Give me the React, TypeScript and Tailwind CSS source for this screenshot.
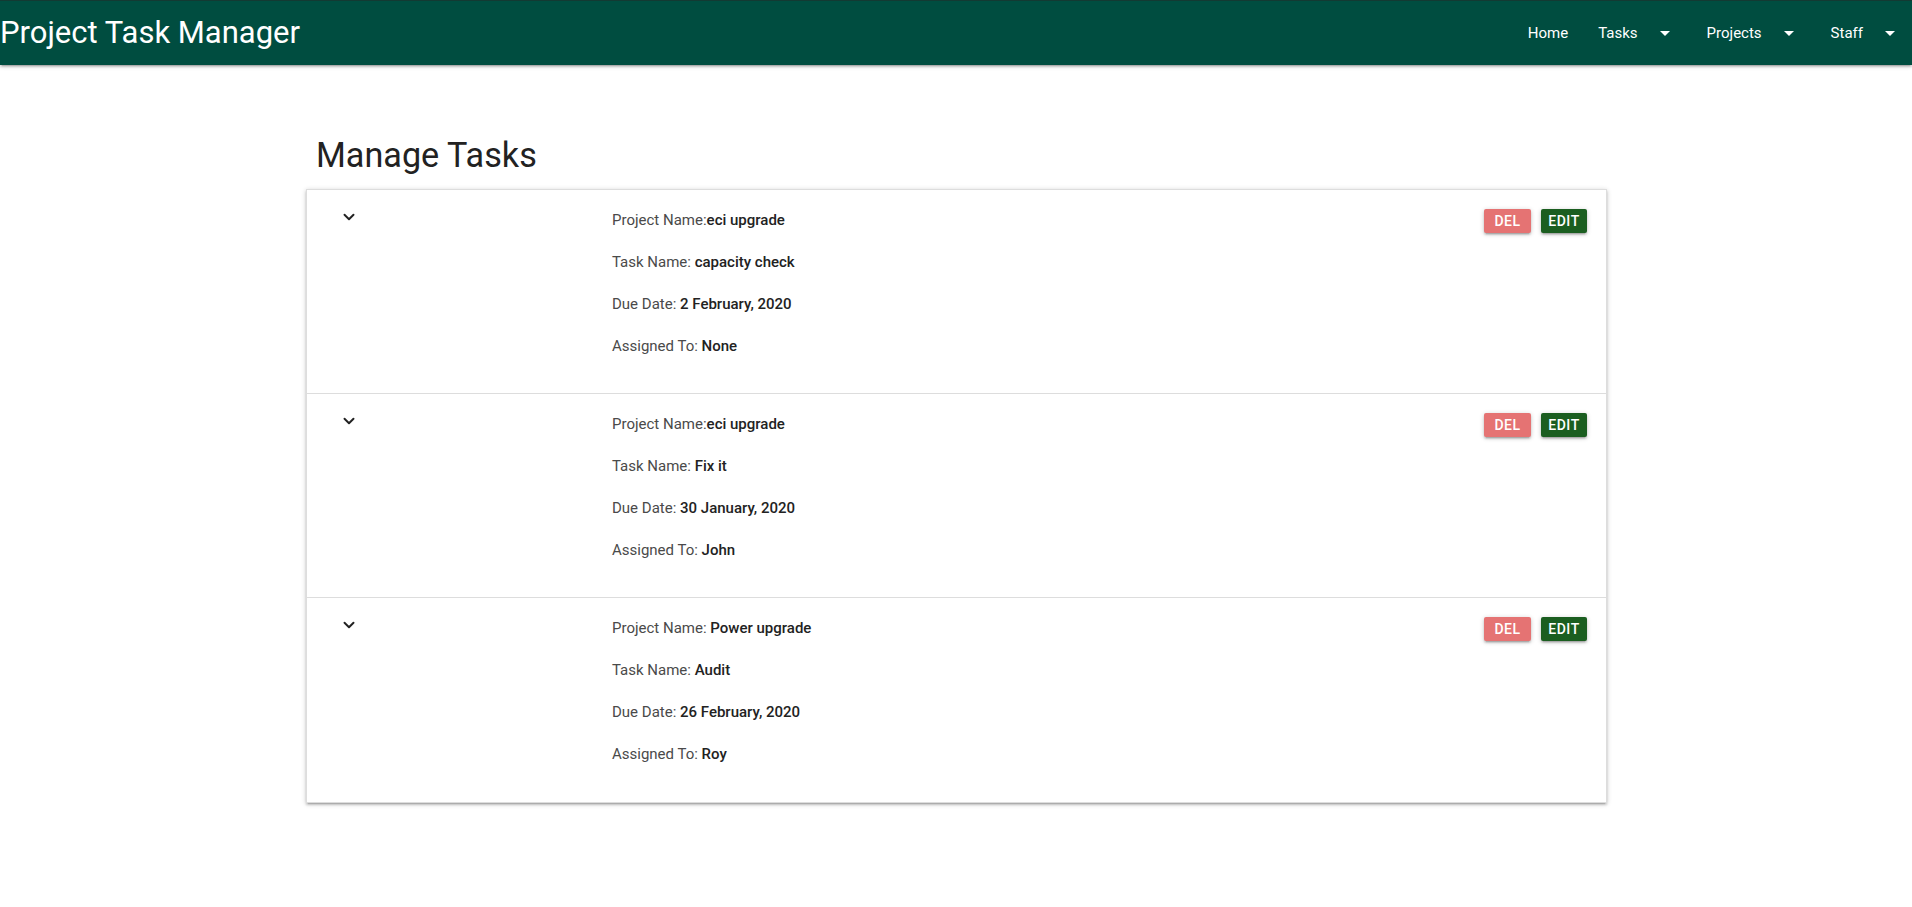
import { ChevronDown } from 'lucide-react';

type Task = {
  project: string;
  projectSep: string;
  name: string;
  due: string;
  assigned: string;
};

const tasks: Task[] = [
  { project: 'eci upgrade', projectSep: ':', name: 'capacity check', due: '2 February, 2020', assigned: 'None' },
  { project: 'eci upgrade', projectSep: ':', name: 'Fix it', due: '30 January, 2020', assigned: 'John' },
  { project: 'Power upgrade', projectSep: ': ', name: 'Audit', due: '26 February, 2020', assigned: 'Roy' },
];

const z1 =
  'shadow-[0_2px_2px_0_rgba(0,0,0,0.14),0_3px_1px_-2px_rgba(0,0,0,0.12),0_1px_5px_0_rgba(0,0,0,0.2)]';

function Caret() {
  return (
    <svg viewBox="0 0 24 24" className="ml-[15px] h-6 w-6 fill-white">
      <path d="M7 10l5 5 5-5z" />
    </svg>
  );
}

function NavItem({ label, dropdown = false }: { label: string; dropdown?: boolean }) {
  return (
    <li>
      <a className="flex h-[64px] items-center px-[15px] text-[15px] text-white">
        {label}
        {dropdown && <Caret />}
      </a>
    </li>
  );
}

function TaskRow({ task, last }: { task: Task; last: boolean }) {
  return (
    <div className={`flex h-[204px] pt-[19px] ${last ? '' : 'border-b border-[#ddd]'}`}>
      <div className="w-[305px] shrink-0">
        <ChevronDown className="-mt-[1px] ml-[33px] h-[18px] w-[18px] text-[#222]" strokeWidth={2.6} />
      </div>
      <div className="flex flex-1 flex-col gap-[20px] text-[15px] leading-[22px]">
        <p className="text-[#4a4a4a]">
          Project Name{task.projectSep}
          <span className="font-medium text-[#222]">{task.project}</span>
        </p>
        <p className="text-[#4a4a4a]">
          Task Name: <span className="font-medium text-[#222]">{task.name}</span>
        </p>
        <p className="text-[#4a4a4a]">
          Due Date: <span className="font-medium text-[#222]">{task.due}</span>
        </p>
        <p className="text-[#4a4a4a]">
          Assigned To: <span className="font-medium text-[#222]">{task.assigned}</span>
        </p>
      </div>
      <div className="mr-[19px] flex h-6 gap-[10px]">
        <button
          className={`h-6 w-[47px] rounded-[2px] bg-[#e57373] text-[14px] font-medium uppercase tracking-[0.5px] text-white ${z1}`}
        >
          Del
        </button>
        <button
          className={`h-6 w-[46px] rounded-[2px] bg-[#1b5e20] text-[14px] font-medium uppercase tracking-[0.5px] text-white ${z1}`}
        >
          Edit
        </button>
      </div>
    </div>
  );
}

export default function App() {
  return (
    <div className="min-h-screen overflow-hidden bg-white font-['Roboto','Liberation_Sans',sans-serif]">
      <nav className={`relative z-10 flex h-[65px] items-center justify-between border-t border-[#133a33] bg-[#004d40] ${z1}`}>
        <a className="text-[31px] leading-[64px] text-white">Project Task Manager</a>
        <ul className="-mr-[5px] flex">
          <NavItem label="Home" />
          <NavItem label="Tasks" dropdown />
          <NavItem label="Projects" dropdown />
          <NavItem label="Staff" dropdown />
        </ul>
      </nav>

      <main className="mx-auto w-[1280px] pt-[71px]">
        <h4 className="mb-[15px] text-[34.2px] leading-[38px] text-[#222]">Manage Tasks</h4>
        <div className={`-ml-[10px] w-[1301px] border border-[#ddd] bg-white ${z1}`}>
          {tasks.map((t, i) => (
            <TaskRow key={i} task={t} last={i === tasks.length - 1} />
          ))}
        </div>
      </main>
    </div>
  );
}
